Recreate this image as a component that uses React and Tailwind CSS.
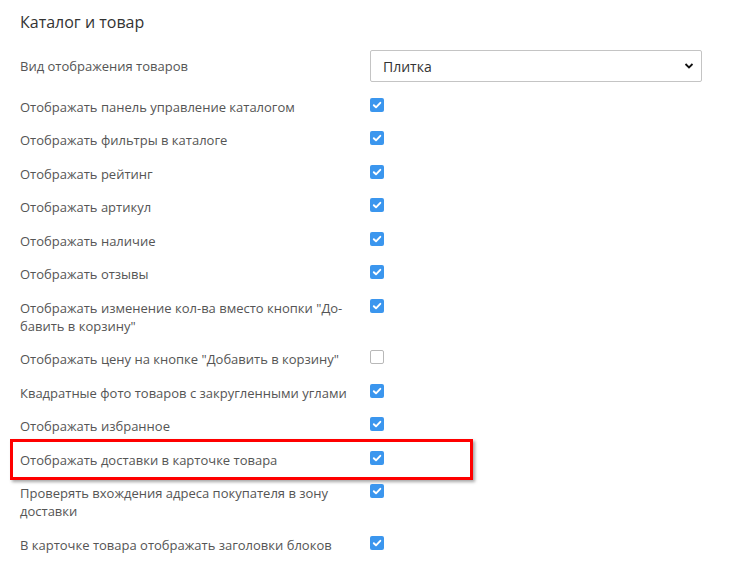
import React from "react";

const rows = [
  { label: "Отображать панель управление каталогом", checked: true },
  { label: "Отображать фильтры в каталоге", checked: true },
  { label: "Отображать рейтинг", checked: true },
  { label: "Отображать артикул", checked: true },
  { label: "Отображать наличие", checked: true },
  { label: "Отображать отзывы", checked: true },
  {
    label: ['Отображать изменение кол-ва вместо кнопки "До-', 'бавить в корзину"'],
    checked: true,
  },
  { label: 'Отображать цену на кнопке "Добавить в корзину"', checked: false },
  { label: "Квадратные фото товаров с закругленными углами", checked: true },
  { label: "Отображать избранное", checked: true },
  { label: "Отображать доставки в карточке товара", checked: true, marked: true },
  {
    label: ["Проверять вхождения адреса покупателя в зону", "доставки"],
    checked: true,
  },
  { label: "В карточке товара отображать заголовки блоков", checked: true },
];

const Checkbox = ({ checked }) =>
  checked ? (
    <div className="w-[14px] h-[14px] rounded-[2px] bg-[#3b96ee] flex items-center justify-center">
      <svg width="10" height="10" viewBox="0 0 10 10">
        <polyline
          points="1.8,5.2 4,7.3 8.3,2.8"
          fill="none"
          stroke="white"
          strokeWidth="1.9"
          strokeLinecap="round"
          strokeLinejoin="round"
        />
      </svg>
    </div>
  ) : (
    <div className="w-[14px] h-[14px] rounded-[2px] bg-white border border-[#b8b8b8]" />
  );

const App = () => {
  return (
    <div
      className="min-h-screen bg-white px-5 pt-[11px]"
      style={{ fontFamily: '"Open Sans", sans-serif' }}
    >
      <h2 className="text-[16px] leading-[22px] text-[#333] mb-[17px]">
        Каталог и товар
      </h2>

      <div className="flex flex-col gap-[15.5px]">
        <div className="flex items-center">
          <div className="w-[350px] text-[13px] leading-[18px] text-[#555]">
            Вид отображения товаров
          </div>
          <div className="w-[332px] h-[32px] border border-[#c4c4c4] rounded-[2px] flex items-center justify-between pl-3 pr-[7px]">
            <span className="text-[14px] text-[#333]">Плитка</span>
            <svg width="10" height="8" viewBox="0 0 10 8">
              <polyline
                points="1.5,2 5,5.5 8.5,2"
                fill="none"
                stroke="#111"
                strokeWidth="1.8"
              />
            </svg>
          </div>
        </div>

        {rows.map((row, i) => (
          <div key={i} className="relative flex items-start">
            {row.marked && (
              <div className="absolute left-[-10px] top-[-12px] w-[463px] h-[41px] border-[3px] border-[#ff0000] shadow-[2px_2px_3px_rgba(0,0,0,0.35)]" />
            )}
            <div className="w-[350px] text-[13px] leading-[18px] text-[#555]">
              {Array.isArray(row.label) ? (
                <>
                  {row.label[0]}
                  <br />
                  {row.label[1]}
                </>
              ) : (
                row.label
              )}
            </div>
            <Checkbox checked={row.checked} />
          </div>
        ))}
      </div>
    </div>
  );
};

export default App;
